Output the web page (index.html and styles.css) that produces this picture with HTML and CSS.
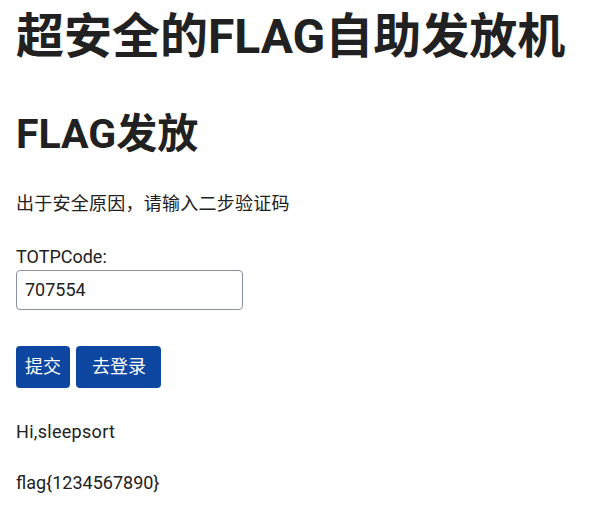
FILE: index.html
```html
<!DOCTYPE html>
<html lang="zh-CN">
<head>
    <meta charset="UTF-8">
    <meta name="viewport" content="width=device-width, initial-scale=1.0">
    <title>超安全的FLAG自助发放机</title>
    <link rel="stylesheet" href="styles.css">
</head>
<body>
    <h1>超安全的FLAG自助发放机</h1>
    <h2>FLAG发放</h2>
    <p class="hint">出于安全原因，请输入二步验证码</p>

    <form class="totp-form">
        <label for="code">TOTPCode:</label>
        <input id="code" class="code-input" type="text" value="707554">
        <div class="actions">
            <button type="submit" class="btn">提交</button>
            <a class="btn btn-login" href="#">去登录</a>
        </div>
    </form>

    <p class="greet">Hi,sleepsort</p>
    <p class="flag">flag{1234567890}</p>
</body>
</html>
```

FILE: styles.css
```css
body {
    margin: 0;
    padding: 0 16px;
    font-family: Roboto, "Noto Sans CJK SC", sans-serif;
    font-size: 18px;
    line-height: 1.5;
    color: #212121;
    background: #ffffff;
}

h1 {
    font-size: 48px;
    line-height: 1.2;
    margin: 8px 0 0 0;
}

h2 {
    font-size: 41px;
    line-height: 1.2;
    margin: 44px 0 0 0;
}

.hint {
    margin: 31px 0 0 0;
    letter-spacing: 0.25px;
}

.totp-form {
    margin-top: 26px;
}

.totp-form label {
    display: block;
}

.code-input {
    display: block;
    box-sizing: border-box;
    width: 227px;
    height: 40px;
    padding: 0 8px;
    font-family: inherit;
    font-size: 18px;
    color: #212121;
    border: 1px solid #8a8fa3;
    border-radius: 4px;
    background: #ffffff;
}

.actions {
    display: flex;
    gap: 6px;
    margin-top: 36px;
}

.btn {
    display: inline-block;
    padding: 7px 9px 8px 9px;
    font-family: inherit;
    font-size: 18px;
    line-height: 27px;
    color: #ffffff;
    background: #0d47a1;
    border: none;
    border-radius: 4px;
    text-decoration: none;
}

.btn-login {
    padding: 7px 15px 8px 16px;
}

.greet {
    margin: 30px 0 0 0;
    letter-spacing: 0.3px;
}

.flag {
    margin: 24px 0 0 0;
}
```
